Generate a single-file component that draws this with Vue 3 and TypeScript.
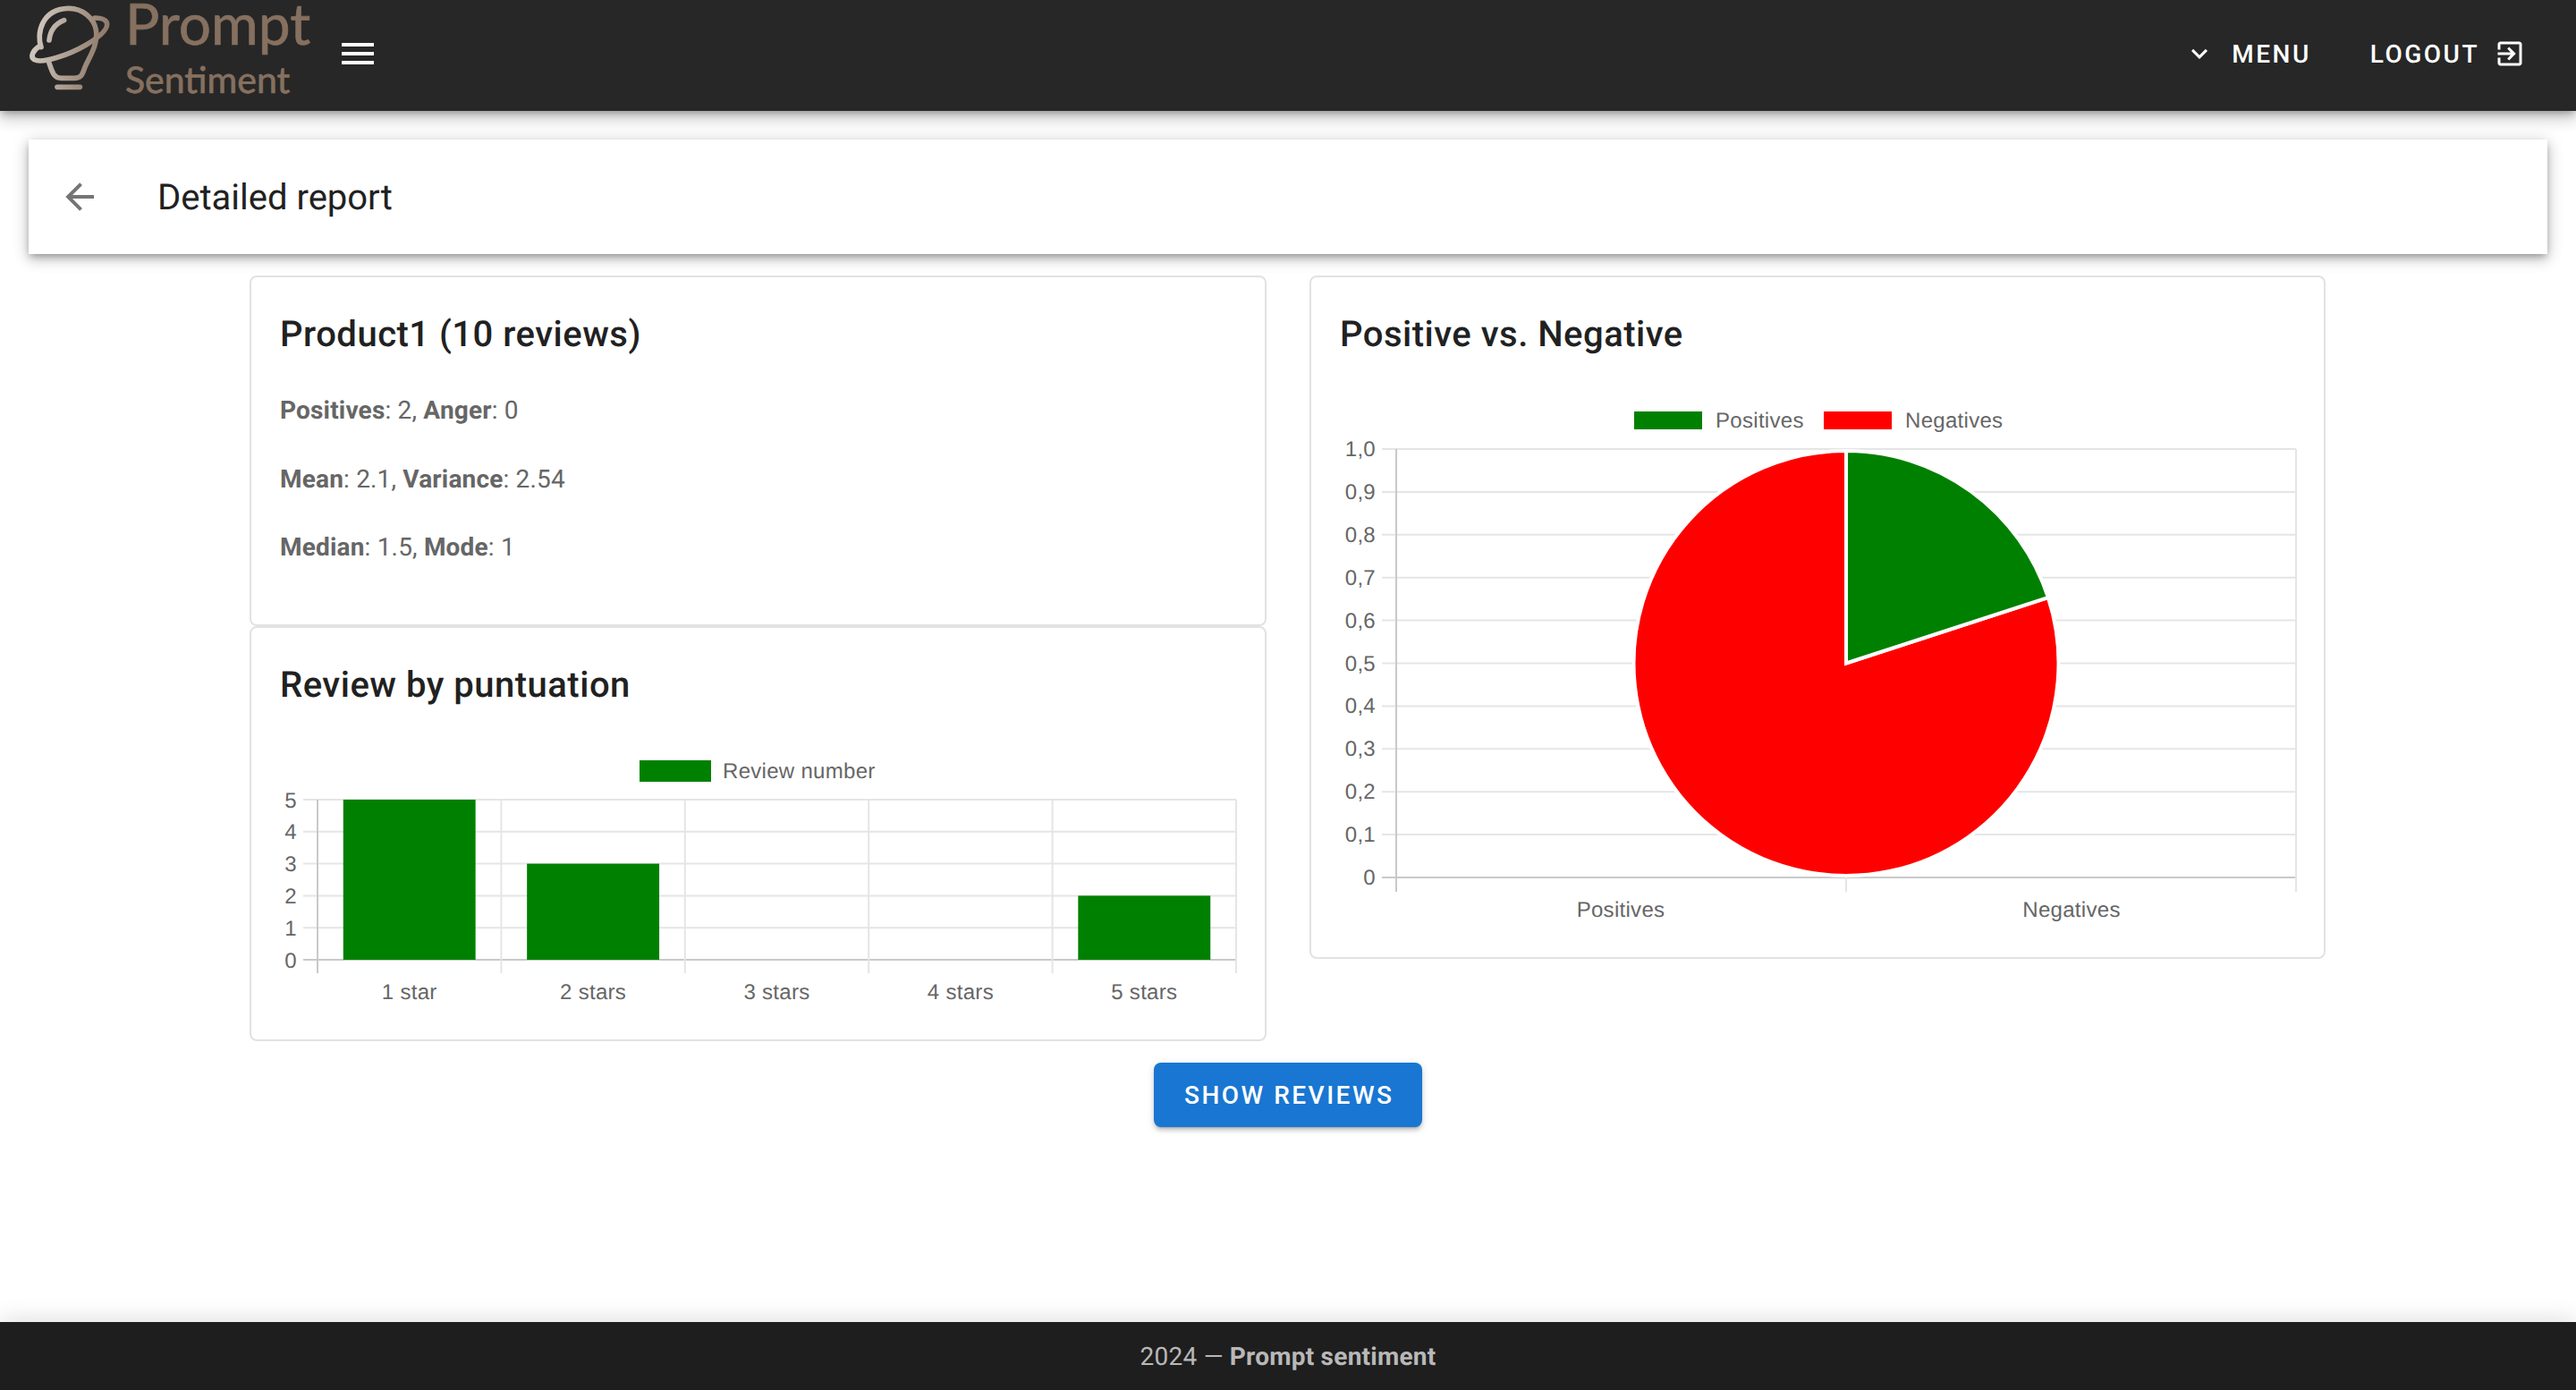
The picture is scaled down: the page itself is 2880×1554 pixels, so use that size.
<script setup lang="ts">
// Detailed report page: toolbar, stats cards and the two charts
interface Tick {
  label: string;
  y: number;
}

const stats = [
  [
    { name: 'Positives', value: '2' },
    { name: 'Anger', value: '0' }
  ],
  [
    { name: 'Mean', value: '2.1' },
    { name: 'Variance', value: '2.54' }
  ],
  [
    { name: 'Median', value: '1.5' },
    { name: 'Mode', value: '1' }
  ]
];

// =========================
// BAR CHART
// =========================
const bar = { left: 41, right: 1068, top: 54, bottom: 233, tickEnd: 248 };
const barValues = [
  { label: '1 star', value: 5 },
  { label: '2 stars', value: 3 },
  { label: '3 stars', value: 0 },
  { label: '4 stars', value: 0 },
  { label: '5 stars', value: 2 }
];
const slot = (bar.right - bar.left) / barValues.length;
const barWidth = slot * 0.72;
const unit = (bar.bottom - bar.top) / 5;

const barTicks: Tick[] = [5, 4, 3, 2, 1, 0].map((n) => ({
  label: String(n),
  y: bar.bottom - n * unit
}));
const barColumns = barValues.map((item, i) => ({
  ...item,
  center: bar.left + slot * (i + 0.5),
  height: item.value * unit
}));
const barLines = [1, 2, 3, 4, 5].map((i) => bar.left + slot * i);

// =========================
// PIE CHART
// =========================
const pie = { left: 63, right: 1069, top: 52, bottom: 531, tickEnd: 547 };
const pieCx = 566;
const pieCy = 291.5;
const pieR = 237.5;
const share = 0.2;
const step = (pie.bottom - pie.top) / 10;

const pieTicks: Tick[] = Array.from({ length: 11 }, (_, i) => ({
  label: i === 0 ? '0' : (i / 10).toFixed(1).replace('.', ','),
  y: pie.bottom - i * step
}));

const angle = share * Math.PI * 2;
const endX = pieCx + pieR * Math.sin(angle);
const endY = pieCy - pieR * Math.cos(angle);
const greenSlice = `M${pieCx} ${pieCy}L${pieCx} ${pieCy - pieR}A${pieR} ${pieR} 0 0 1 ${endX} ${endY}Z`;
const redSlice = `M${pieCx} ${pieCy}L${endX} ${endY}A${pieR} ${pieR} 0 1 1 ${pieCx} ${pieCy - pieR}Z`;
</script>

<template>
  <div class="page">
    <header class="appbar">
      <div class="logo">
        <svg class="logo-mark" viewBox="0 0 330 330" fill="none" stroke="url(#logoFade)" stroke-width="17" stroke-linecap="round" stroke-linejoin="round">
          <defs>
            <linearGradient id="logoFade" gradientUnits="userSpaceOnUse" x1="40" y1="120" x2="305" y2="170">
              <stop offset="0" stop-color="#d3cbc1" />
              <stop offset="1" stop-color="#8a7464" />
            </linearGradient>
          </defs>
          <path d="M78 158C62 115 78 30 170 28C215 27 255 60 262 100C270 150 240 190 225 225C215 255 210 262 190 262L145 262C120 262 115 240 105 212" />
          <path d="M72 155C50 170 40 190 55 200C80 215 170 185 230 150C280 120 305 95 298 75C292 62 275 60 258 60" />
          <path d="M105 135C108 105 125 80 155 68" />
          <path d="M132 292L208 292" />
        </svg>
        <div class="logo-text">
          <span class="logo-main">Prompt</span>
          <span class="logo-sub">Sentiment</span>
        </div>
      </div>
      <svg class="icon burger" viewBox="0 0 24 24"><path d="M3 6h18v2H3V6m0 5h18v2H3v-2m0 5h18v2H3v-2Z" /></svg>
      <div class="spacer"></div>
      <div class="nav-item">
        <svg class="icon small" viewBox="0 0 24 24"><path d="M7.41 8.58 12 13.17l4.59-4.59L18 10l-6 6-6-6 1.41-1.42Z" /></svg>
        <span>MENU</span>
      </div>
      <div class="nav-item logout">
        <span>LOGOUT</span>
        <svg class="icon small" viewBox="0 0 24 24"><path d="M10.09 15.59 11.5 17l5-5-5-5-1.41 1.41L12.67 11H3v2h9.67l-2.58 2.59ZM19 3H5c-1.11 0-2 .9-2 2v4h2V5h14v14H5v-4H3v4c0 1.1.89 2 2 2h14c1.1 0 2-.9 2-2V5c0-1.1-.9-2-2-2Z" /></svg>
      </div>
    </header>

    <main class="content">
      <section class="toolbar">
        <svg class="icon back" viewBox="0 0 24 24"><path d="M20 11v2H8l5.5 5.5-1.42 1.42L4.16 12l7.92-7.92L13.5 5.5 8 11h12Z" /></svg>
        <h1>Detailed report</h1>
      </section>

      <div class="grid">
        <div class="column">
          <article class="card summary">
            <h2>Product1 (10 reviews)</h2>
            <p v-for="(row, i) in stats" :key="i" class="stat">
              <template v-for="(item, j) in row" :key="item.name">
                <b>{{ item.name }}</b>: {{ item.value }}<template v-if="j === 0">, </template>
              </template>
            </p>
          </article>

          <article class="card">
            <h2>Review by puntuation</h2>
            <svg class="chart bar-chart" viewBox="0 0 1068 290">
              <rect x="401" y="10" width="80" height="24" fill="#008000" />
              <text x="494" y="30">Review number</text>

              <line v-for="t in barTicks" :key="t.label" :x1="bar.left - 16" :x2="bar.right" :y1="t.y" :y2="t.y" :class="t.label === '0' ? 'axis' : 'grid-line'" />
              <line :x1="bar.left" :x2="bar.left" :y1="bar.top" :y2="bar.tickEnd" class="axis" />
              <line v-for="x in barLines" :key="x" :x1="x" :x2="x" :y1="bar.top" :y2="bar.tickEnd" class="grid-line" />

              <rect v-for="c in barColumns" :key="c.label" :x="c.center - barWidth / 2" :y="bar.bottom - c.height" :width="barWidth" :height="c.height" fill="#008000" />

              <text v-for="t in barTicks" :key="t.label" x="18" :y="t.y + 8.5" text-anchor="end">{{ t.label }}</text>
              <text v-for="c in barColumns" :key="c.label" :x="c.center" y="277" text-anchor="middle">{{ c.label }}</text>
            </svg>
          </article>
        </div>

        <article class="card pie-card">
          <h2>Positive vs. Negative</h2>
          <svg class="chart pie-chart" viewBox="0 0 1068 588">
            <rect x="329" y="10" width="76" height="20" fill="#008000" />
            <text x="420" y="28">Positives</text>
            <rect x="541" y="10" width="76" height="20" fill="#ff0000" />
            <text x="632" y="28">Negatives</text>

            <line v-for="t in pieTicks" :key="t.label" :x1="pie.left - 16" :x2="pie.right" :y1="t.y" :y2="t.y" :class="t.label === '0' ? 'axis' : 'grid-line'" />
            <line :x1="pie.left" :x2="pie.left" :y1="pie.top" :y2="pie.tickEnd" class="axis" />
            <line x1="566" x2="566" :y1="pie.top" :y2="pie.tickEnd" class="grid-line" />
            <line :x1="pie.right" :x2="pie.right" :y1="pie.top" :y2="pie.tickEnd" class="grid-line" />

            <path :d="redSlice" fill="#ff0000" stroke="#fff" stroke-width="4" />
            <path :d="greenSlice" fill="#008000" stroke="#fff" stroke-width="4" />

            <text v-for="t in pieTicks" :key="t.label" x="40" :y="t.y + 8" text-anchor="end">{{ t.label }}</text>
            <text x="314" y="575" text-anchor="middle">Positives</text>
            <text x="818" y="575" text-anchor="middle">Negatives</text>
          </svg>
        </article>
      </div>

      <button class="show-btn" type="button">SHOW REVIEWS</button>
    </main>

    <footer class="footer">2024 — <strong>Prompt sentiment</strong></footer>
  </div>
</template>

<style scoped>
.page {
  min-height: 1554px;
  display: flex;
  flex-direction: column;
  background: #fff;
  font-family: Roboto, sans-serif;
  text-rendering: geometricPrecision;
  overflow: hidden;
}

/* =========================
   APP BAR
   ========================= */
.appbar {
  box-sizing: border-box;
  height: 124px;
  flex: none;
  display: flex;
  align-items: center;
  padding: 0 56px 4px 20px;
  background: #272727;
  color: #fff;
  position: relative;
  z-index: 2;
  box-shadow: 0 4px 8px -2px rgba(0, 0, 0, 0.3), 0 8px 16px 2px rgba(0, 0, 0, 0.14), 0 2px 20px 2px rgba(0, 0, 0, 0.1);
}

.logo {
  width: 356px;
  height: 120px;
  display: flex;
}

.logo-mark {
  width: 110px;
  height: 110px;
  flex: none;
}

.logo-text {
  margin-left: 10px;
  display: flex;
  flex-direction: column;
  font-family: Lato, sans-serif;
  color: #86705f;
  -webkit-text-stroke: 0.7px #86705f;
}

.logo-main {
  font-size: 64px;
  line-height: 52px;
}

.logo-sub {
  font-size: 41px;
  line-height: 40px;
  margin-top: 17px;
}

.icon {
  width: 48px;
  height: 48px;
  flex: none;
  fill: currentColor;
}

.icon.small {
  width: 36px;
  height: 36px;
}

.spacer {
  flex: 1;
}

.nav-item {
  display: flex;
  align-items: center;
  gap: 18px;
  font-size: 28px;
  font-weight: 500;
  letter-spacing: 2.5px;
}

.logout {
  margin-left: 66px;
  gap: 16px;
}

/* =========================
   CONTENT
   ========================= */
.content {
  flex: 1;
  display: flex;
  flex-direction: column;
  align-items: center;
}

.toolbar {
  align-self: stretch;
  height: 128px;
  margin: 32px 32px 0;
  padding-left: 33px;
  display: flex;
  align-items: center;
  background: #fff;
  box-shadow: 0 4px 8px -2px rgba(0, 0, 0, 0.3), 0 6px 14px 1px rgba(0, 0, 0, 0.14), 0 2px 18px 2px rgba(0, 0, 0, 0.1);
}

.back {
  color: #757575;
}

.toolbar h1 {
  margin: 0 0 0 63px;
  font-size: 40px;
  font-weight: 400;
  letter-spacing: 0;
  color: #212121;
}

.grid {
  margin: 24px 1px 0 0;
  display: grid;
  grid-template-columns: 1137px 1136px;
  gap: 48px;
  align-items: start;
}

.card {
  box-sizing: border-box;
  border: 2px solid #e2e2e2;
  border-radius: 8px;
  padding: 32px 32px 32px;
  background: #fff;
}

.card h2 {
  margin: 0;
  font-size: 40px;
  font-weight: 500;
  line-height: 64px;
  letter-spacing: 0.5px;
  color: #212121;
}

.summary {
  height: 392px;
}

.summary h2 {
  margin-bottom: 31px;
}

.stat {
  margin: 0 0 32.5px;
  font-size: 28px;
  line-height: 44px;
  letter-spacing: 0.18px;
  color: #666;
}

.stat b {
  font-weight: 700;
}

.chart {
  display: block;
  width: 1068px;
  margin-top: 44px;
  overflow: visible;
}

.bar-chart {
  height: 290px;
  margin-top: 42px;
  margin-left: 1px;
}

.pie-chart {
  height: 588px;
}

.chart text {
  font-family: "Liberation Sans", Arial, sans-serif;
  font-size: 24px;
  letter-spacing: 0.3px;
  fill: #666;
}

.grid-line {
  stroke: #e5e5e5;
  stroke-width: 2;
}

.axis {
  stroke: #c9c9c9;
  stroke-width: 2;
}

.show-btn {
  margin-top: 24px;
  width: 300px;
  height: 72px;
  padding: 0 0 0 2.5px;
  border: 0;
  border-radius: 8px;
  background: #1976d2;
  color: #fff;
  font-family: Roboto, sans-serif;
  font-size: 28px;
  font-weight: 500;
  letter-spacing: 2.5px;
  box-shadow: 0 3px 2px -2px rgba(0, 0, 0, 0.2), 0 4px 4px 0 rgba(0, 0, 0, 0.14), 0 2px 10px 0 rgba(0, 0, 0, 0.12);
}

/* =========================
   FOOTER
   ========================= */
.footer {
  height: 76px;
  flex: none;
  display: flex;
  align-items: center;
  justify-content: center;
  gap: 0.25em;
  background: #1e1e1e;
  color: #b8b8b8;
  font-size: 28px;
  letter-spacing: 0.25px;
  box-shadow: 0 -4px 24px rgba(0, 0, 0, 0.12);
}
</style>

<style>
html,
body {
  margin: 0;
  background: #fff;
}
</style>
